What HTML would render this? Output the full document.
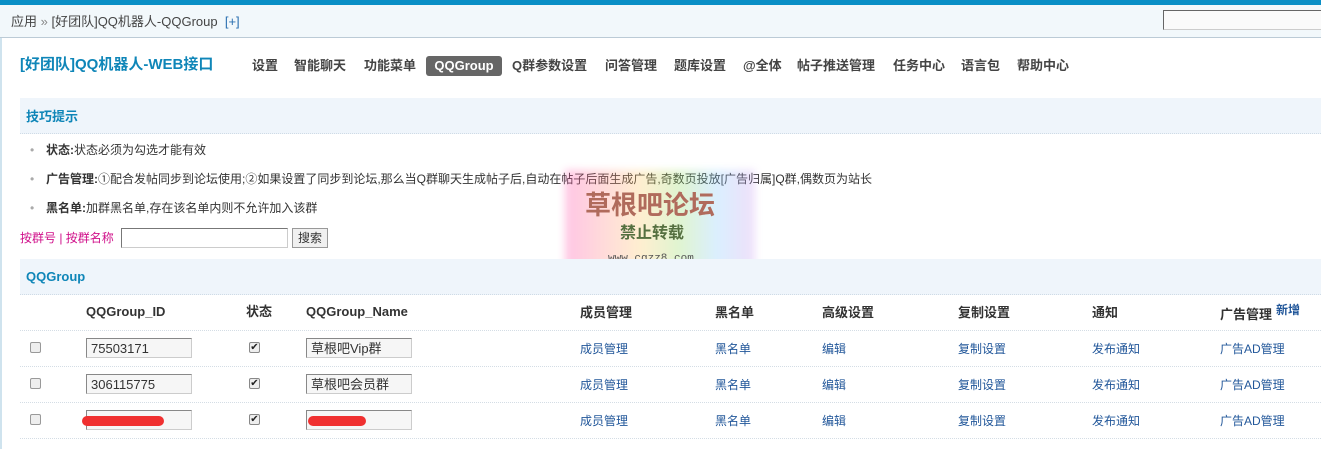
<!DOCTYPE html>
<html><head><meta charset="utf-8"><style>
*{margin:0;padding:0;box-sizing:border-box}
body{width:1321px;height:449px;overflow:hidden;background:#fff;font-family:"Liberation Sans","Noto Sans CJK SC",sans-serif;font-size:12px;color:#333;position:relative}
.a{position:absolute;white-space:nowrap;line-height:16px}
.top{left:0;top:0;width:1321px;height:5px;background:#0a8fc6}
.crumb{left:0;top:5px;width:1321px;height:33px;background:#f2f8fb;border-bottom:1px solid #bccbd6}
.lb{left:0;top:38px;width:2px;height:411px;background:#cfe3ee}
.nav b{font-size:13px;color:#444}
.hd{background:#eff5fb;border-bottom:1px dotted #cfdbe6}
.ttl{color:#0f86b8;font-weight:bold;font-size:13px}
.th{font-weight:bold;font-size:13px;color:#333}
.lk{color:#22579a;font-size:12px}
.ln{left:20px;width:1301px;height:0;border-top:1px dotted #d4dde5}
.inp{height:20px;border:1px solid #888;border-right-color:#ccc;border-bottom-color:#ccc;background:#f6f6f6;font-size:13px;padding:2px 4px;line-height:15px}
.cb{width:11px;height:11px;border:1px solid #999;border-radius:2px;background:#eee}
.ck{width:11px;height:11px;border:1px solid #888;border-radius:2px;background:#eee;font-size:10px;line-height:9px;text-align:center;color:#222}
.red{height:10px;background:#f03030;border-radius:5px}
</style></head><body>
<div class="a top"></div>
<div class="a crumb"></div>
<div class="a" style="left:11px;top:14px;font-size:13px;color:#444">应用 <span style="color:#888">»</span> [好团队]QQ机器人-QQGroup &nbsp;<span style="color:#2a6fb0">[+]</span></div>
<div class="a" style="left:1163px;top:10px;width:160px;height:20px;border:1px solid #666;border-right:none;border-bottom-color:#ccc;background:#fafafa"></div>
<div class="a lb"></div>
<div class="a ttl" style="left:20px;top:57px;font-size:15px">[好团队]QQ机器人-WEB接口</div>
<div class="a nav" style="left:252px;top:58px"><b>设置</b></div>
<div class="a nav" style="left:294px;top:58px"><b>智能聊天</b></div>
<div class="a nav" style="left:364px;top:58px"><b>功能菜单</b></div>
<div class="a" style="left:426px;top:56px;width:76px;height:20px;background:#666;border-radius:3px;color:#fff;font-weight:bold;font-size:13px;text-align:center;line-height:20px">QQGroup</div>
<div class="a nav" style="left:512px;top:58px"><b>Q群参数设置</b></div>
<div class="a nav" style="left:605px;top:58px"><b>问答管理</b></div>
<div class="a nav" style="left:674px;top:58px"><b>题库设置</b></div>
<div class="a nav" style="left:743px;top:58px"><b>@全体</b></div>
<div class="a nav" style="left:797px;top:58px"><b>帖子推送管理</b></div>
<div class="a nav" style="left:893px;top:58px"><b>任务中心</b></div>
<div class="a nav" style="left:961px;top:58px"><b>语言包</b></div>
<div class="a nav" style="left:1017px;top:58px"><b>帮助中心</b></div>

<div class="a hd" style="left:20px;top:98px;width:1301px;height:36px"></div>
<div class="a ttl" style="left:26px;top:109px">技巧提示</div>
<div class="a" style="left:30px;top:142px;color:#aaa">•</div>
<div class="a" style="left:46px;top:142px"><b>状态:</b>状态必须为勾选才能有效</div>
<div class="a" style="left:30px;top:171px;color:#aaa">•</div>
<div class="a" style="left:46px;top:171px"><b>广告管理:</b>①配合发帖同步到论坛使用;②如果设置了同步到论坛,那么当Q群聊天生成帖子后,自动在帖子后面生成广告,奇数页投放[广告归属]Q群,偶数页为站长</div>
<div class="a" style="left:30px;top:200px;color:#aaa">•</div>
<div class="a" style="left:46px;top:200px"><b>黑名单:</b>加群黑名单,存在该名单内则不允许加入该群</div>
<div class="a" style="left:20px;top:230px;color:#d0108a">按群号 | 按群名称</div>
<div class="a" style="left:121px;top:228px;width:167px;height:20px;border:1px solid #777;border-right-color:#ccc;border-bottom-color:#ccc"></div>
<div class="a" style="left:292px;top:228px;width:36px;height:20px;border:1px solid #999;background:#f0f0f0;text-align:center;line-height:18px">搜索</div>

<div class="a" style="left:565px;top:170px;width:190px;height:108px;opacity:.3;filter:blur(4px);background:linear-gradient(90deg,#f4a 0%,#fc6 40%,#9d6 60%,#8cf 80%,#c9e 100%)"></div>
<div class="a" style="left:585px;top:192px;font-size:26px;line-height:26px;font-weight:bold;color:#b06b5c">草根吧论坛</div>
<div class="a" style="left:620px;top:226px;font-size:16px;font-weight:bold;color:#557040">禁止转载</div>
<div class="a" style="left:608px;top:251px;font-size:11px;color:#555;font-family:'Liberation Mono',monospace">www.cgzz8.com</div>

<div class="a hd" style="left:20px;top:259px;width:1301px;height:36px"></div>
<div class="a ttl" style="left:26px;top:269px">QQGroup</div>
<div class="a th" style="left:86px;top:304px">QQGroup_ID</div>
<div class="a th" style="left:246px;top:304px">状态</div>
<div class="a th" style="left:306px;top:304px">QQGroup_Name</div>
<div class="a th" style="left:580px;top:305px">成员管理</div>
<div class="a th" style="left:715px;top:305px">黑名单</div>
<div class="a th" style="left:822px;top:305px">高级设置</div>
<div class="a th" style="left:958px;top:305px">复制设置</div>
<div class="a th" style="left:1092px;top:305px">通知</div>
<div class="a th" style="left:1220px;top:307px">广告管理</div>
<div class="a" style="left:1276px;top:302px;font-weight:bold;color:#22579a">新增</div>
<div class="a ln" style="top:330px"></div>
<div class="a ln" style="top:366px"></div>
<div class="a ln" style="top:402px"></div>
<div class="a ln" style="top:438px"></div>

<div class="a cb" style="left:30px;top:342px"></div>
<div class="a inp" style="left:86px;top:338px;width:106px">75503171</div>
<div class="a ck" style="left:249px;top:342px">✔</div>
<div class="a inp" style="left:306px;top:338px;width:106px">草根吧Vip群</div>

<div class="a cb" style="left:30px;top:378px"></div>
<div class="a inp" style="left:86px;top:374px;width:106px">306115775</div>
<div class="a ck" style="left:249px;top:378px">✔</div>
<div class="a inp" style="left:306px;top:374px;width:106px">草根吧会员群</div>

<div class="a cb" style="left:30px;top:414px"></div>
<div class="a inp" style="left:86px;top:410px;width:106px"></div>
<div class="a red" style="left:82px;top:416px;width:82px"></div>
<div class="a ck" style="left:249px;top:414px">✔</div>
<div class="a inp" style="left:306px;top:410px;width:106px"></div>
<div class="a red" style="left:308px;top:416px;width:58px"></div>

<div class="a lk" style="left:580px;top:341px">成员管理</div><div class="a lk" style="left:715px;top:341px">黑名单</div><div class="a lk" style="left:822px;top:341px">编辑</div><div class="a lk" style="left:958px;top:341px">复制设置</div><div class="a lk" style="left:1092px;top:341px">发布通知</div><div class="a lk" style="left:1220px;top:341px">广告AD管理</div>
<div class="a lk" style="left:580px;top:377px">成员管理</div><div class="a lk" style="left:715px;top:377px">黑名单</div><div class="a lk" style="left:822px;top:377px">编辑</div><div class="a lk" style="left:958px;top:377px">复制设置</div><div class="a lk" style="left:1092px;top:377px">发布通知</div><div class="a lk" style="left:1220px;top:377px">广告AD管理</div>
<div class="a lk" style="left:580px;top:413px">成员管理</div><div class="a lk" style="left:715px;top:413px">黑名单</div><div class="a lk" style="left:822px;top:413px">编辑</div><div class="a lk" style="left:958px;top:413px">复制设置</div><div class="a lk" style="left:1092px;top:413px">发布通知</div><div class="a lk" style="left:1220px;top:413px">广告AD管理</div>
</body></html>
